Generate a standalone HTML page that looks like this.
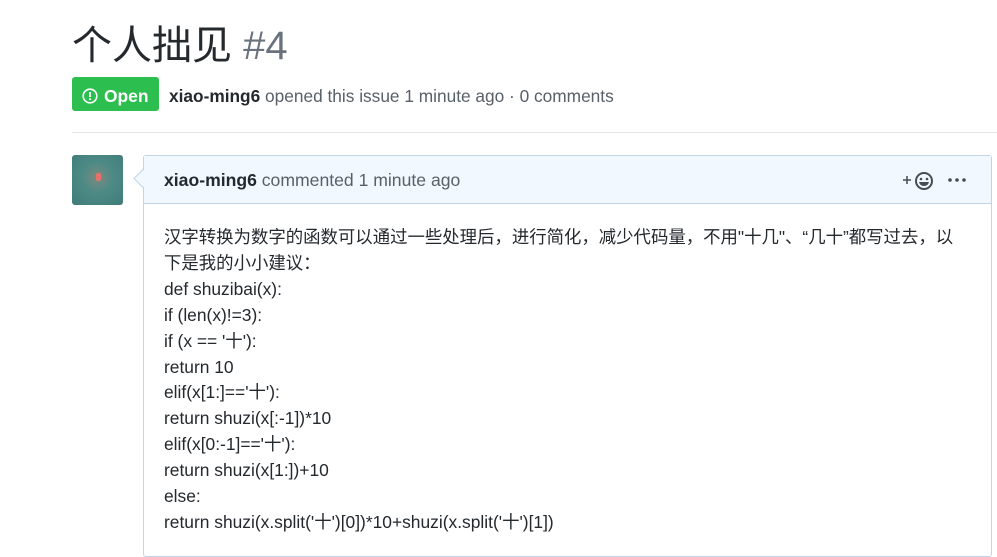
<!DOCTYPE html>
<html><head><meta charset="utf-8"><style>
body{margin:0;background:#fff;width:997px;height:541px;overflow:hidden;font-family:"Liberation Sans","Noto Sans CJK SC",sans-serif;color:#24292e;position:relative}
.t{position:absolute;left:72px;top:18px;font-size:40px;line-height:56px;font-weight:400}
.t span{color:#6a737d;font-family:"Liberation Sans",sans-serif;font-weight:300}
.badge{position:absolute;left:72px;top:77px;width:87px;height:34px;background:#2cbe4e;border-radius:3px;color:#fff;font-weight:bold;font-size:17.4px;line-height:34px}
.badge svg{position:absolute;left:10px;top:11px}
.badge b{position:absolute;left:32px;top:2px}
.meta{position:absolute;left:169px;top:85px;font-size:17.3px;color:#586069;line-height:22px}
.meta b{color:#24292e}
.hr{position:absolute;left:72px;right:0;top:132px;border-top:1px solid #e1e4e8}
.av{position:absolute;left:72px;top:155px;width:51px;height:50px;border-radius:3px;background:radial-gradient(circle at 50% 45%,#7a8a80 0,#4e8a85 40%,#3f7c7a 100%)}
.av i{position:absolute;left:24px;top:18px;width:5px;height:8px;background:#e8706a;border-radius:2px}
.box{position:absolute;left:143px;top:155px;width:847px;height:400px;border:1px solid #c0d3eb;border-radius:3px}
.hd{height:47px;background:#f1f8ff;border-bottom:1px solid #c0d3eb;position:relative}
.hd .n{position:absolute;left:20px;top:14px;font-size:17.6px;color:#586069}
.hd .n b{color:#24292e}
.arr{position:absolute;left:136px;top:172px;width:12px;height:12px;background:#f1f8ff;border-left:1px solid #c0d3eb;border-bottom:1px solid #c0d3eb;transform:rotate(45deg)}
.bd{position:absolute;left:20px;top:69px;font-size:17.4px;line-height:25.9px;color:#24292e;width:820px;white-space:nowrap}
</style></head><body>
<div class="t">个人拙见 <span>#4</span></div>
<div class="badge"><svg width="16" height="16" viewBox="0 0 16 16"><circle cx="8" cy="8" r="6.8" fill="none" stroke="#fff" stroke-width="1.6"/><rect x="7.1" y="4" width="1.8" height="5" fill="#fff"/><rect x="7.1" y="10.3" width="1.8" height="1.8" fill="#fff"/></svg><b>Open</b></div>
<div class="meta"><b>xiao-ming6</b> opened this issue 1 minute ago · 0 comments</div>
<div class="hr"></div>
<div class="av"><i></i></div>
<div class="box">
<div class="hd"><div class="n"><b>xiao-ming6</b> commented 1 minute ago</div>
<svg style="position:absolute;left:758px;top:15px" width="34" height="20" viewBox="0 0 34 20"><path d="M1 9h8M5 5v8" stroke="#444d56" stroke-width="1.5"/><circle cx="22" cy="10" r="8" fill="none" stroke="#444d56" stroke-width="2"/><circle cx="19" cy="8" r="1.3" fill="#444d56"/><circle cx="25" cy="8" r="1.3" fill="#444d56"/><path d="M17 11h10q-1 4-5 4t-5-4z" fill="#444d56"/></svg>
<svg style="position:absolute;left:804px;top:22px" width="18" height="4"><circle cx="2" cy="2" r="1.8" fill="#444d56"/><circle cx="9" cy="2" r="1.8" fill="#444d56"/><circle cx="16" cy="2" r="1.8" fill="#444d56"/></svg>
</div>
<div class="bd">汉字转换为数字的函数可以通过一些处理后，进行简化，减少代码量，不用"十几"、“几十”都写过去，以<br>下是我的小小建议：<br>def shuzibai(x):<br>if (len(x)!=3):<br>if (x == '十'):<br>return 10<br>elif(x[1:]=='十'):<br>return shuzi(x[:-1])*10<br>elif(x[0:-1]=='十'):<br>return shuzi(x[1:])+10<br>else:<br>return shuzi(x.split('十')[0])*10+shuzi(x.split('十')[1])</div>
</div>
<div class="arr"></div>
</body></html>
